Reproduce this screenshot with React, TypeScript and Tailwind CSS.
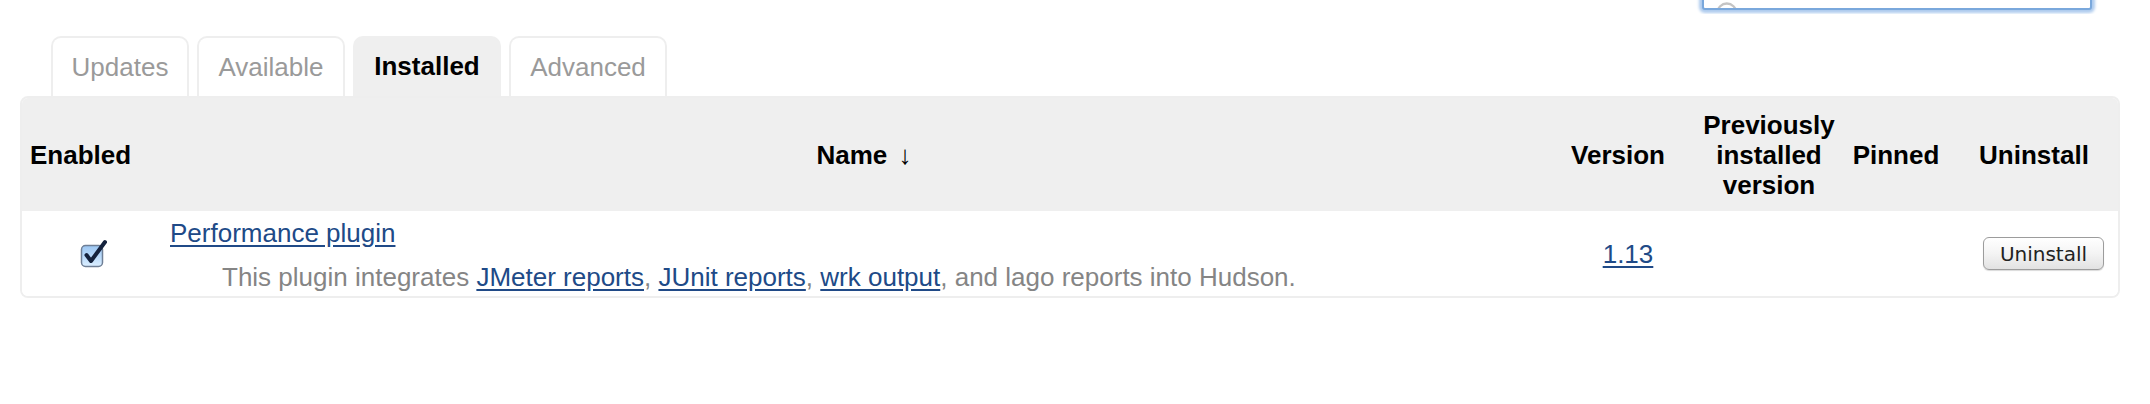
import { Search } from "lucide-react";

const tabs = [
  { label: "Updates", w: "w-[138px]", active: false },
  { label: "Available", w: "w-[148px]", active: false },
  { label: "Installed", w: "w-[148px]", active: true },
  { label: "Advanced", w: "w-[158px]", active: false },
];

function Checkbox() {
  return (
    <svg width="28" height="30" viewBox="0 0 28 30">
      <defs>
        <linearGradient id="cb" x1="0" y1="0" x2="0" y2="1">
          <stop offset="0" stopColor="#9cc6f2" />
          <stop offset="0.5" stopColor="#b8d9fa" />
          <stop offset="1" stopColor="#dcefff" />
        </linearGradient>
      </defs>
      <rect x="1.5" y="6.5" width="21" height="21" rx="4" fill="url(#cb)" stroke="#6f7f96" strokeWidth="1.5" />
      <path d="M6.5 16 L11 22 L25 3" fill="none" stroke="#15223d" strokeWidth="4" strokeLinecap="round" strokeLinejoin="round" />
    </svg>
  );
}

function Link({ children }: { children: React.ReactNode }) {
  return <a className="text-[#204a87] underline underline-offset-[3px] cursor-pointer">{children}</a>;
}

export default function App() {
  return (
    <div className="w-[2150px] h-[404px] bg-white font-['Liberation_Sans',Arial,sans-serif] text-[26px] leading-[30px]">
      {/* bottom of the search box from the header above */}
      <div className="h-[14px] overflow-hidden flex justify-end items-end pr-[58px] pb-[4px]">
        <div className="w-[390px] h-[40px] shrink-0 rounded-[3px] border-2 border-[#7aa8dc] bg-white shadow-[0_0_3px_3px_#aecbee] flex items-end pl-[10px] overflow-hidden">
          <Search className="w-[28px] h-[28px] text-[#c4c4c4] mb-[-20px]" />
        </div>
      </div>

      {/* tabs */}
      <div className="flex gap-[8px] pl-[51px] pt-[22px]">
        {tabs.map((t) => (
          <div
            key={t.label}
            className={
              t.active
                ? `${t.w} h-[60px] flex items-center justify-center rounded-t-[10px] bg-[#efefef] font-bold text-black`
                : `${t.w} h-[60px] flex items-center justify-center rounded-t-[10px] border-2 border-b-0 border-[#eeeeee] text-[#9a9a9a]`
            }
          >
            {t.label}
          </div>
        ))}
      </div>

      {/* plugins table */}
      <div className="ml-[20px] w-[2100px] border-2 border-[#eeeeee] rounded-[8px] overflow-hidden">
        <div className="grid grid-cols-[140px_1404px_114px_168px_102px_168px] h-[113px] bg-[#efefef] font-bold text-black items-center">
          <div className="pl-[8px]">Enabled</div>
          <div className="text-center">
            Name <span className="font-normal pl-[4px]">↓</span>
          </div>
          <div className="text-center pr-[10px]">Version</div>
          <div className="text-center pl-[10px]">
            Previously
            <br />
            installed
            <br />
            version
          </div>
          <div className="text-center pr-[6px]">Pinned</div>
          <div className="text-center">Uninstall</div>
        </div>

        <div className="grid grid-cols-[140px_1404px_114px_168px_102px_168px] items-center bg-white">
          <div className="pl-[58px] flex">
            <Checkbox />
          </div>
          <div className="pl-[8px] pt-[7px] pb-[4px]">
            <div>
              <Link>Performance plugin</Link>
            </div>
            <div className="mt-[14px] ml-[52px] text-[#858585]">
              This plugin integrates <Link>JMeter reports</Link>, <Link>JUnit reports</Link>,{" "}
              <Link>wrk output</Link>, and lago reports into Hudson.
            </div>
          </div>
          <div className="text-center pl-[10px]">
            <Link>1.13</Link>
          </div>
          <div />
          <div />
          <div className="pl-[33px] flex">
            <button className="w-[121px] h-[33px] rounded-[6px] border border-[#9c9c9c] bg-gradient-to-b from-white via-[#f4f4f4] to-[#e2e2e2] shadow-[0_1px_1px_rgba(0,0,0,0.15)] font-['DejaVu_Sans',sans-serif] text-[20px] leading-[20px] text-[#222]">
              Uninstall
            </button>
          </div>
        </div>
      </div>
    </div>
  );
}
